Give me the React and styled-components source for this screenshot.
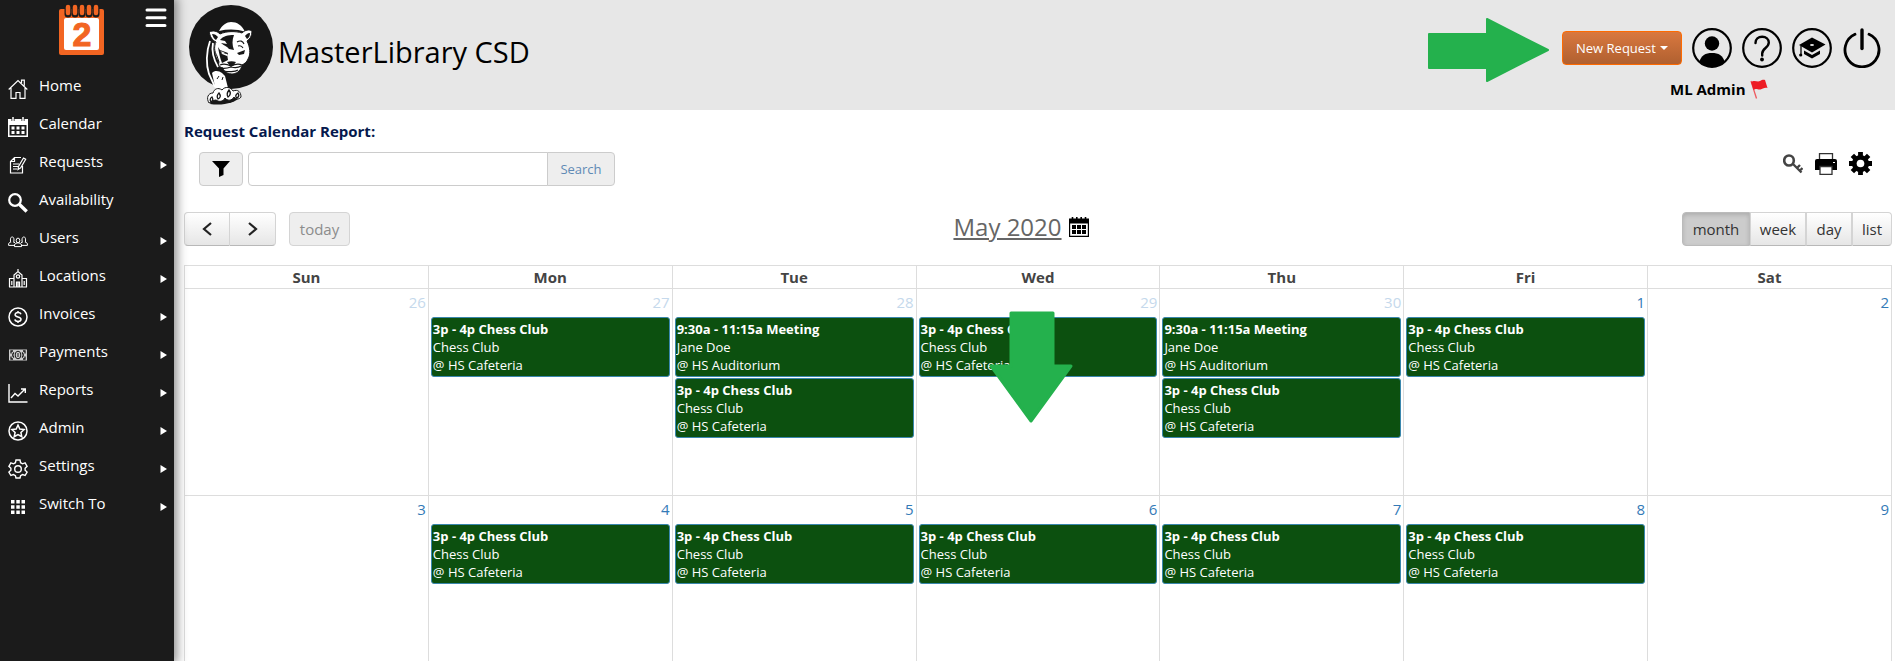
import React from 'react'
import styled, { createGlobalStyle, css } from 'styled-components'

const GlobalStyle = createGlobalStyle`
	* {
		box-sizing: border-box;
	}
	body {
		margin: 0;
		background: #fff;
		color: #333;
		font-family: 'Open Sans', 'Noto Sans', sans-serif;
		font-size: 15px;
		line-height: 20px;
	}
	button,
	input {
		font-family: inherit;
	}
	svg {
		display: block;
	}
`
const Page = styled.div`
	display: flex;
	height: 100vh;
	overflow: hidden;
`
const Sidebar = styled.nav`
	position: relative;
	z-index: 2;
	flex: none;
	width: 174px;
	background: #1b1b1b;
	color: #fff;
	box-shadow: 0 0 10px 3px rgba(0, 0, 0, 0.45);
`
const SidebarTop = styled.div`
	display: flex;
	justify-content: space-between;
	align-items: flex-start;
	height: 66px;
	padding: 4px 7px 0 59px;
`
const IconButton = styled.button`
	display: flex;
	flex: none;
	padding: 0;
	border: 0;
	background: none;
	color: #000;
	cursor: pointer;
`
const MenuButton = styled(IconButton)`
	margin-top: 4px;
	color: #fff;
`
const Menu = styled.ul`
	margin: 0;
	padding: 0;
	list-style: none;
`
const MenuLink = styled.a`
	display: flex;
	align-items: center;
	height: 38px;
	padding: 0 7px 0 8px;
	color: #fff;
	text-decoration: none;
	svg {
		flex: none;
		margin-top: 8px;
	}
`
const MenuText = styled.span`
	flex: 1;
	margin-left: 11px;
`
const Main = styled.main`
	flex: 1;
	min-width: 0;
`
const Header = styled.header`
	display: flex;
	justify-content: space-between;
	height: 110px;
	padding: 4px 13px 0 14px;
	background: #e7e7e7;
`
const Brand = styled.div`
	display: flex;
	align-items: flex-start;
	gap: 4px;
`
const BrandName = styled.h1`
	margin: 28px 0 0;
	color: #000;
	font-size: 29px;
	font-weight: 500;
	line-height: 40px;
`
const Actions = styled.div`
	display: flex;
	align-items: flex-start;
	padding-top: 14px;
`
const ActionArrow = styled.div`
	margin-right: 13px;
`
const ActionGroup = styled.div`
	padding-top: 10px;
`
const ActionRow = styled.div`
	display: flex;
	align-items: center;
	gap: 10px;
`
const NewRequest = styled.button`
	display: flex;
	align-items: center;
	justify-content: center;
	gap: 4px;
	width: 120px;
	height: 34px;
	padding: 0;
	border: 1px solid #ff6a00;
	border-radius: 4px;
	background: linear-gradient(#d9783f, #b06030);
	color: #fff;
	font-size: 13px;
	cursor: pointer;
`
const UserName = styled.div`
	display: flex;
	align-items: center;
	gap: 4px;
	margin: 11px 0 0 108px;
	color: #000;
	font-size: 15px;
	font-weight: 700;
`
const Content = styled.section`
	padding: 11px 3px 0 10px;
`
const ReportTitle = styled.h2`
	margin: 0;
	color: #06194d;
	font-size: 15px;
	font-weight: 700;
	line-height: 20px;
`
const FilterBar = styled.div`
	display: flex;
	justify-content: space-between;
	align-items: flex-start;
	margin-top: 11px;
	padding: 0 20px 0 15px;
`
const SearchForm = styled.form`
	display: flex;
`
const FilterButton = styled.button`
	display: flex;
	align-items: center;
	justify-content: center;
	width: 44px;
	height: 34px;
	margin-right: 5px;
	padding: 0;
	border: 1px solid #ccc;
	border-radius: 4px;
	background: #eee;
`
const SearchInput = styled.input`
	width: 300px;
	height: 34px;
	padding: 0 10px;
	border: 1px solid #ccc;
	border-radius: 4px 0 0 4px;
	font-size: 14px;
`
const SearchButton = styled.button`
	width: 68px;
	height: 34px;
	margin-left: -1px;
	padding: 0;
	border: 1px solid #ccc;
	border-radius: 0 4px 4px 0;
	background: #eee;
	color: #5f8ab5;
	font-size: 13px;
`
const Tools = styled.div`
	display: flex;
	align-items: center;
	gap: 12px;
`
const CalendarBar = styled.div`
	display: flex;
	justify-content: space-between;
	margin: 26px 0 19px;
`
const BarLeft = styled.div`
	display: flex;
	gap: 13px;
`
const ButtonGroup = styled.div`
	display: flex;
`
const CalendarButton = styled.button`
	display: flex;
	align-items: center;
	justify-content: center;
	width: ${({ $width }) => $width}px;
	height: 34px;
	padding: 0;
	border: 1px solid #d4d4d4;
	border-bottom-color: #b8b8b8;
	background: linear-gradient(#fff, #e6e6e6);
	color: #333;
	font-size: 15px;
	${ButtonGroup} & + & {
		border-left-width: 0;
	}
	&:first-child {
		border-radius: 4px 0 0 4px;
	}
	&:last-child {
		border-radius: 0 4px 4px 0;
	}
	${({ $active }) =>
		$active &&
		css`
			border-color: #bbb;
			background: #ccc;
			box-shadow: inset 0 2px 4px rgba(0, 0, 0, 0.15);
		`}
`
const TodayButton = styled(CalendarButton)`
	&& {
		border-color: #d4d4d4;
		border-radius: 4px;
		background: #eee;
		color: #8c8c8c;
	}
`
const MonthTitle = styled.div`
	display: flex;
	align-items: center;
	gap: 7px;
	height: 30px;
	padding-left: 10px;
`
const MonthLink = styled.a`
	color: #666;
	font-size: 24px;
	font-weight: 500;
	line-height: 30px;
	text-decoration: underline;
`
const Calendar = styled.table`
	width: 100%;
	border-collapse: collapse;
	table-layout: fixed;
	th,
	td {
		border: 1px solid #ddd;
	}
`
const DayName = styled.th`
	height: 23px;
	padding: 0;
	color: #444;
	font-size: 15px;
	font-weight: 700;
	line-height: 20px;
`
const DayCell = styled.td`
	height: 207px;
	padding: 2px 2px 0;
	vertical-align: top;
`
const DayNumber = styled.a`
	display: block;
	height: 26px;
	color: ${({ $muted }) => ($muted ? '#c5d9ec' : '#337ab7')};
	line-height: 22px;
	text-align: right;
	text-decoration: none;
`
const EventBox = styled.a`
	display: block;
	height: 60px;
	margin-bottom: 1px;
	padding: 2px 1px;
	border: 1px solid #3a87ad;
	border-radius: 3px;
	background: #0c500f;
	color: #fff;
	font-size: 13px;
	line-height: 18px;
	text-decoration: none;
	white-space: nowrap;
	overflow: hidden;
	strong {
		display: block;
	}
	span {
		display: block;
	}
`
const DownArrow = styled.div`
	position: absolute;
	top: 311px;
	left: calc(50% + 41px);
`

const line = { fill: 'none', stroke: '#fff', strokeWidth: 1.2 }

const icons = {
	home: (
		<g {...line}>
			<path d='M.7 10.500 10 1.500l9.300 9M3 9v10.300h5V13.500h4v5.800h5V9M13.500 4V1.200h2.800v5.500' />
		</g>
	),
	calendar: (
		<g>
			<path d='M0 2h20v18H0zM1.500 8v10.500h17V8z' fill='#fff' fillRule='evenodd' />
			<path d='M5 0v4M15 0v4' stroke='#1b1b1b' strokeWidth='3' />
			<path d='M5 0v4M15 0v4' stroke='#fff' strokeWidth='1.500' />
			<path
				d='M3.500 9.500h3v3h-3zM8.500 9.500h3v3h-3zM13.500 9.500h3v3h-3zM3.500 14h3v3h-3zM8.500 14h3v3h-3zM13.500 14h3v3h-3z'
				fill='#fff'
			/>
		</g>
	),
	requests: (
		<g {...line}>
			<path d='M13 2.500H6.500L2.500 6.500v11.500h12V11M6.500 2.500v4h-4M5 9h6M5 11.500h5M5 14h4' />
			<path d='m10 14.500.5-3L15.500 3l2.200 1.300-5 8.500z' />
		</g>
	),
	search: (
		<g fill='none' stroke='#fff'>
			<circle cx='7' cy='7' r='5.800' strokeWidth='2.200' />
			<path d='m11.500 11.500 7.200 7' strokeWidth='3.400' />
		</g>
	),
	users: (
		<g {...line} strokeWidth='1'>
			<path d='M2.700 11.500c-.7-4 0-5.500 1.500-5.500s2.200 1.500 1.500 5.500M14.300 11.500c-.7-4 0-5.500 1.500-5.500s2.200 1.500 1.500 5.500' />
			<path d='M2.700 10.800.6 12.500v1.900H6M17.300 10.800l2.100 1.700v1.900H14M5.700 11l1.500 1M14.300 11l-1.500 1' />
			<ellipse cx='10' cy='9.500' rx='1.800' ry='2.400' />
			<path d='M6.500 15.600v-2.100l2.500-1.700h2l2.500 1.700v2.100z' />
		</g>
	),
	locations: (
		<g {...line}>
			<path d='M1.500 18V9.500H6V18M14 9.500h4.500V18M6 10V6l4-3.500L14 6v12M1 18h18M10 3V0M8.500 18v-5h3v5M10 13v5M3.800 12v4M16.200 12v4' />
			<circle cx='10' cy='7.500' r='1.700' />
		</g>
	),
	invoices: (
		<g {...line} strokeWidth='1.500'>
			<circle cx='10' cy='10' r='9' />
			<path d='M13 7.300C12.600 6 11.500 5.600 10 5.600c-1.700 0-2.900.7-2.900 2.100C7.100 10.800 13 9 13 12.200c0 1.500-1.300 2.200-3 2.200s-2.900-.7-3.100-2.100M10 4v2M10 14v2' />
		</g>
	),
	payments: (
		<g>
			<path d='M1 4.500h18v11H1z' fill='#ccc' />
			<path
				d='M5 6H3v2.500M15 6h2v2.500M5 14H3v-2.500M15 14h2v-2.500M6 7.500c-1.500 1.500-1.500 3.500 0 5M14 7.500c1.500 1.500 1.500 3.500 0 5'
				fill='none'
				stroke='#1b1b1b'
				strokeWidth='1.300'
			/>
			<ellipse cx='10' cy='10' rx='2.800' ry='3.800' fill='none' stroke='#1b1b1b' />
			<path d='M10 8v4' stroke='#1b1b1b' />
		</g>
	),
	reports: (
		<g {...line} strokeWidth='1.400'>
			<path d='M1 1v18h18.500M3 15l4-4.500 3 2.500 7-7M13 6h4.300v4' />
		</g>
	),
	admin: (
		<g {...line} strokeWidth='1.500'>
			<circle cx='10' cy='10' r='9' />
			<path d='m10 4 1.800 4 4.300.5-3.200 2.900.9 4.300-3.800-2.200-3.800 2.200.9-4.300L3.900 8.500 8.200 8z' />
		</g>
	),
	settings: (
		<g {...line} strokeWidth='1.400'>
			<path d='M8 1h4l.6 2.700 1.900 1.100 2.600-.9 2 3.400-2 1.900v2l2 1.900-2 3.400-2.600-.9-1.900 1.100L12 19H8l-.6-2.300-1.900-1.100-2.600.9-2-3.400 2-1.900v-2l-2-1.900 2-3.400 2.600.9 1.900-1.100z' />
			<circle cx='10' cy='10' r='3.300' />
		</g>
	),
	switch: (
		<path
			d='M3 3h3.500v3.500H3zM8.300 3h3.500v3.500H8.300zM13.500 3H17v3.500h-3.500zM3 8.300h3.500v3.500H3zM8.300 8.300h3.500v3.500H8.300zM13.500 8.300H17v3.500h-3.500zM3 13.500h3.500V17H3zM8.300 13.500h3.500V17H8.300zM13.500 13.500H17V17h-3.500z'
			fill='#fff'
		/>
	),
}

const menuItems = [
	{ icon: 'home', text: 'Home' },
	{ icon: 'calendar', text: 'Calendar' },
	{ icon: 'requests', text: 'Requests', more: true },
	{ icon: 'search', text: 'Availability' },
	{ icon: 'users', text: 'Users', more: true },
	{ icon: 'locations', text: 'Locations', more: true },
	{ icon: 'invoices', text: 'Invoices', more: true },
	{ icon: 'payments', text: 'Payments', more: true },
	{ icon: 'reports', text: 'Reports', more: true },
	{ icon: 'admin', text: 'Admin', more: true },
	{ icon: 'settings', text: 'Settings', more: true },
	{ icon: 'switch', text: 'Switch To', more: true },
]

const chess = { title: '3p - 4p Chess Club', who: 'Chess Club', place: '@ HS Cafeteria' }
const meeting = {
	title: '9:30a - 11:15a Meeting',
	who: 'Jane Doe',
	place: '@ HS Auditorium',
}

const dayNames = ['Sun', 'Mon', 'Tue', 'Wed', 'Thu', 'Fri', 'Sat']
const weeks = [
	[
		{ day: 26, muted: true, events: [] },
		{ day: 27, muted: true, events: [chess] },
		{ day: 28, muted: true, events: [meeting, chess] },
		{ day: 29, muted: true, events: [chess] },
		{ day: 30, muted: true, events: [meeting, chess] },
		{ day: 1, events: [chess] },
		{ day: 2, events: [] },
	],
	[
		{ day: 3, events: [] },
		{ day: 4, events: [chess] },
		{ day: 5, events: [chess] },
		{ day: 6, events: [chess] },
		{ day: 7, events: [chess] },
		{ day: 8, events: [chess] },
		{ day: 9, events: [] },
	],
]

const AppLogo = () => (
	<svg width='46' height='52' viewBox='0 0 46 52'>
		<rect x='0' y='5' width='45' height='46' rx='2' fill='#f26522' />
		<path d='M5 16q0-2 2-2h31q2 0 2 2v28q0 2-2 2H7q-2 0-2-2z' fill='#fff' />
		{[8, 15, 22, 29, 36].map(x => (
			<g key={x}>
				<path d={`M${x + 1} 2v8`} stroke='#1b1b1b' strokeWidth='7' strokeLinecap='round' />
				<path d={`M${x + 1} 3v6`} stroke='#f26522' strokeWidth='4.500' strokeLinecap='round' />
			</g>
		))}
		<text
			x='23'
			y='42'
			textAnchor='middle'
			fill='#f26522'
			stroke='#f26522'
			fontFamily='Liberation Sans, sans-serif'
			fontSize='34'
			fontWeight='700'
		>
			2
		</text>
	</svg>
)

const Panther = () => (
	<svg width='86' height='102' viewBox='0 0 86 102'>
		<circle cx='43' cy='43' r='42' fill='#171717' />
		{/* back and flank */}
		<path d='M31 27c3-6 8-9 12-9 6 0 11 3 14 10-8-3-17-3-26-1z' fill='#fff' />
		<path
			d='M22 37c-4 11-4 24-1 33l6 13M25 39c-2 10 1 17 5 24M28 38c-2 8 0 13 3 18'
			fill='none'
			stroke='#fff'
			strokeWidth='1.800'
		/>
		{/* head */}
		<path
			d='M21 28c4-2 8-1 11 2 6-3 16-3 22-1 3-3 7-4 10-2 0 5-2 8-5 10 3 6 4 13 1 18-1 3-4 5-6 6-1 5-4 8-9 9-5 0-9-2-10-6-4-1-5-3-4-6l-2-6c-3-5-3-10-1-14-4-2-6-5-7-11z'
			fill='#fff'
			stroke='#171717'
		/>
		<path d='M24 30c3 0 4 1 6 3l-2 3c-2-1-3-3-4-6zM62 29c-3 0-4 2-5 3l2 3c2-1 3-3 3-6z' fill='#171717' />
		<path
			d='M46 31c-6 0-11 1-14 5l5 1 2 3-6-1c3 3 6 3 8 6l5 1c-2-5-2-10 0-15zM30 43c1 6 2 11 4 16l6-3-1-6-5-1zM32 46l8 3-1 3-5-2zM57 46l-8 3 2 2 5-1z'
			fill='#171717'
		/>
		<path d='m33 47 4 2-2 1z' fill='#fff' />
		<path
			d='M49 38c3-2 6-1 7 2M50 42c3-1 4 0 5 2M32 61c4-2 7-1 11 1 4-2 7-3 11-1M33 64c4 1 7 0 10-1 4 1 7 1 10-1M36 67c4 1 11 1 14-1'
			fill='none'
			stroke='#171717'
			strokeWidth='1.100'
		/>
		<path d='M39 58c3-1 6-1 9 0l-3 4h-3z' fill='#171717' />
		{/* leg and paw */}
		<path d='M24 69c3-3 7-2 10 0l3 3 3 12-12 3z' fill='#fff' />
		<path d='m31 72-2 3M35 73l-1 3' stroke='#171717' />
		<path d='M22 100c12 2 26-1 31-8l-8-4-20 6z' fill='#171717' />
		<path
			d='M21 99c-3-5-1-10 4-10 1-4 5-6 9-3 3-4 9-3 11 1 5-2 8 1 8 6-2 3-5 2-7 0-2 4-7 4-9 1-2 4-6 4-9 2-3 0-4 2-7 3z'
			fill='#fff'
			stroke='#171717'
		/>
		<path
			d='M41 86q3 4-1 7-2-3 1-7zM31 89q3 4-1 6-2-3 1-6zM24 93q2 3-1 5-2-3 1-5zM50 89q2 3-1 5-3-2 1-5z'
			fill='none'
			stroke='#171717'
			strokeWidth='1.300'
		/>
	</svg>
)

const CalendarIcon = () => (
	<svg width='20' height='20' viewBox='0 0 20 20'>
		<path d='M0 1.500h20V20H0zM1.200 6.500v12.200h17.600V6.500z' fillRule='evenodd' />
		<path d='M3.500 0v3M7.800 0v3M12.200 0v3M16.500 0v3' stroke='#000' strokeWidth='1.600' />
		<path d='M3 8h4v4H3zM8 8h4v4H8zM13 8h4v4h-4zM3 13h4v4H3zM8 13h4v4H8zM13 13h4v4h-4z' />
	</svg>
)

const HeaderIcons = () => (
	<>
		<IconButton aria-label='Profile'>
			<svg width='40' height='40' viewBox='0 0 40 40'>
				<circle cx='20' cy='20' r='18.800' fill='none' stroke='#000' strokeWidth='2.200' />
				<circle cx='20' cy='15.500' r='7.200' />
				<path d='M7.500 33.500C9 27.500 13.500 25 20 25s11 2.500 12.500 8.500C29.500 37 25 39 20 39S10.500 37 7.500 33.500z' />
			</svg>
		</IconButton>
		<IconButton aria-label='Help'>
			<svg width='40' height='40' viewBox='0 0 40 40' fill='none' stroke='#000'>
				<circle cx='20' cy='20' r='18.800' strokeWidth='2.200' />
				<path
					d='M13.500 15c0-4 2.800-6.300 6.700-6.300 3.800 0 6.600 2.300 6.600 5.900 0 5.400-6.600 5.400-6.600 11v2'
					strokeWidth='2.400'
					strokeLinecap='round'
				/>
				<circle cx='20' cy='31.500' r='1.900' fill='#000' stroke='none' />
			</svg>
		</IconButton>
		<IconButton aria-label='Training'>
			<svg width='40' height='40' viewBox='0 0 40 40'>
				<circle cx='20' cy='20' r='18.800' fill='none' stroke='#000' strokeWidth='2.200' />
				<path d='m20 9.500 13.500 7L20 24.500 7 17z' />
				<path d='m12 22.500 8 4.500 8-4.500v3.500l-8 4.500-8-4.500z' />
				<path d='M9 18v9' stroke='#000' strokeWidth='1.300' />
				<circle cx='8.700' cy='27' r='1.600' />
				<ellipse cx='20' cy='17' rx='2' ry='1' fill='#e7e7e7' />
			</svg>
		</IconButton>
		<IconButton aria-label='Log out'>
			<svg width='40' height='40' viewBox='0 0 40 40' fill='none' stroke='#000' strokeLinecap='round'>
				<path d='M13 6.300a17 17 0 1 0 14 0' strokeWidth='2.800' />
				<path d='M20 2v18.500' strokeWidth='3.400' />
			</svg>
		</IconButton>
	</>
)

const Event = ({ item }) => {
	return (
		<EventBox href='#event'>
			<strong>{item.title}</strong>
			<span>{item.who}</span>
			<span>{item.place}</span>
		</EventBox>
	)
}

const SideMenu = () => {
	return (
		<Sidebar>
			<SidebarTop>
				<AppLogo />
				<MenuButton aria-label='Toggle menu'>
					<svg width='22' height='20' viewBox='0 0 22 20' stroke='#fff' strokeWidth='3' strokeLinecap='round'>
						<path d='M2 2h18M2 9.700h18M2 17.400h18' />
					</svg>
				</MenuButton>
			</SidebarTop>
			<Menu>
				{menuItems.map(item => (
					<li key={item.text}>
						<MenuLink href='#menu'>
							<svg width='20' height='20' viewBox='0 0 20 20'>
								{icons[item.icon]}
							</svg>
							<MenuText>{item.text}</MenuText>
							{item.more && (
								<svg width='7' height='8' viewBox='0 0 7 8'>
									<path d='M.5 0 7 4 .5 8z' fill='#fff' />
								</svg>
							)}
						</MenuLink>
					</li>
				))}
			</Menu>
		</Sidebar>
	)
}

const TopBar = () => {
	return (
		<Header>
			<Brand>
				<Panther />
				<BrandName>MasterLibrary CSD</BrandName>
			</Brand>
			<Actions>
				<ActionArrow>
					<svg width='121' height='64' viewBox='0 0 121 64'>
						<path
							d='M1 16h58V1l61 31-61 31V50H1z'
							fill='#24b14d'
							stroke='#24b14d'
							strokeWidth='2'
							strokeLinejoin='round'
						/>
					</svg>
				</ActionArrow>
				<ActionGroup>
					<ActionRow>
						<NewRequest>
							New Request
							<svg width='8' height='4' viewBox='0 0 8 4'>
								<path d='M0 0h8L4 4z' fill='#fff' />
							</svg>
						</NewRequest>
						<HeaderIcons />
					</ActionRow>
					<UserName>
						ML Admin
						<svg width='18' height='20' viewBox='0 0 18 20'>
							<path d='m1 2 5.500 17.500' stroke='#ee5a5f' strokeWidth='1.300' />
							<path d='M1 3c4-2.500 6 .5 9-1 2-1 3-1.500 5-1l2.500 8c-3-1-5 1-7 1.500-3 .5-4-1.500-7 .5z' fill='#ed1c24' />
						</svg>
					</UserName>
				</ActionGroup>
			</Actions>
		</Header>
	)
}

const Filters = () => {
	return (
		<FilterBar>
			<SearchForm onSubmit={e => e.preventDefault()}>
				<FilterButton type='button' aria-label='Filter'>
					<svg width='18' height='16' viewBox='0 0 18 16'>
						<path d='M0 0h18l-6.500 7.500V14L7 16V7.500z' />
					</svg>
				</FilterButton>
				<SearchInput type='text' aria-label='Search requests' />
				<SearchButton>Search</SearchButton>
			</SearchForm>
			<Tools>
				<IconButton aria-label='Key'>
					<svg width='20' height='22' viewBox='0 0 20 22' fill='none' stroke='#444'>
						<ellipse cx='6' cy='7.500' rx='4.800' ry='5' strokeWidth='2.600' />
						<path d='m10 11 8.500 8.500M14 15l3-3M17 17.500l2.500-2.500' strokeWidth='2.400' />
					</svg>
				</IconButton>
				<IconButton aria-label='Print'>
					<svg width='22' height='22' viewBox='0 0 22 22'>
						<path d='M0 8q0-2 2-2h18q2 0 2 2v9H0z' />
						<path d='M4.500 6V.7h13V6M5 13.500h12v7.800H5z' fill='#fff' stroke='#333' strokeWidth='1.300' />
						<path d='M18 9.500h2' stroke='#fff' />
					</svg>
				</IconButton>
				<IconButton aria-label='Options'>
					<svg width='23' height='23' viewBox='0 0 24 24'>
						<g stroke='#000' strokeWidth='5'>
							<path d='M12 0v24M0 12h24M3.500 3.500l17 17M20.500 3.500l-17 17' />
						</g>
						<circle cx='12' cy='12' r='9' />
						<circle cx='12' cy='12' r='4' fill='#fff' />
					</svg>
				</IconButton>
			</Tools>
		</FilterBar>
	)
}

const App = () => {
	return (
		<>
			<GlobalStyle />
			<Page>
				<SideMenu />
				<Main>
					<TopBar />
					<Content>
						<ReportTitle>Request Calendar Report:</ReportTitle>
						<Filters />
						<CalendarBar>
							<BarLeft>
								<ButtonGroup>
									<CalendarButton $width={46} aria-label='Previous month'>
										<svg width='10' height='14' viewBox='0 0 10 14'>
											<path d='M9 1 2 7l7 6' fill='none' stroke='#222' strokeWidth='2.200' />
										</svg>
									</CalendarButton>
									<CalendarButton $width={46} aria-label='Next month'>
										<svg width='10' height='14' viewBox='0 0 10 14'>
											<path d='m1 1 7 6-7 6' fill='none' stroke='#222' strokeWidth='2.200' />
										</svg>
									</CalendarButton>
								</ButtonGroup>
								<TodayButton $width={61} disabled>
									today
								</TodayButton>
							</BarLeft>
							<MonthTitle>
								<MonthLink href='#month'>May 2020</MonthLink>
								<CalendarIcon />
							</MonthTitle>
							<ButtonGroup>
								<CalendarButton $width={68} $active>
									month
								</CalendarButton>
								<CalendarButton $width={56}>week</CalendarButton>
								<CalendarButton $width={46}>day</CalendarButton>
								<CalendarButton $width={40}>list</CalendarButton>
							</ButtonGroup>
						</CalendarBar>
						<Calendar>
							<thead>
								<tr>
									{dayNames.map(name => (
										<DayName key={name}>{name}</DayName>
									))}
								</tr>
							</thead>
							<tbody>
								{weeks.map((week, i) => (
									<tr key={i}>
										{week.map(({ day, muted, events }) => (
											<DayCell key={day}>
												<DayNumber href='#day' $muted={muted}>
													{day}
												</DayNumber>
												{events.map(item => (
													<Event key={item.title} item={item} />
												))}
											</DayCell>
										))}
									</tr>
								))}
							</tbody>
						</Calendar>
					</Content>
				</Main>
			</Page>
			<DownArrow>
				<svg width='84' height='112' viewBox='0 0 84 112'>
					<path
						d='M22 2h42v53h18l-40 55L2 55h20z'
						fill='#24b14d'
						stroke='#24b14d'
						strokeWidth='3'
						strokeLinejoin='round'
					/>
				</svg>
			</DownArrow>
		</>
	)
}
export default App
